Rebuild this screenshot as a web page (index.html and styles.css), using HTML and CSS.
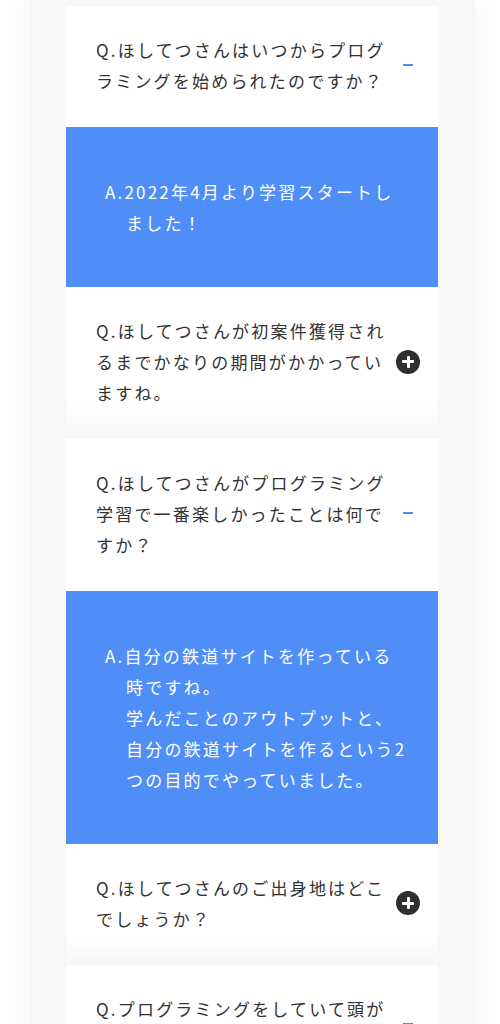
FILE: index.html
```html
<!DOCTYPE html>
<html lang="ja">
<head>
<meta charset="utf-8">
<title>FAQ</title>
<link rel="stylesheet" href="styles.css">
</head>
<body>
<div class="page">
  <div class="faq">
    <div class="q open">
      <p class="q-text">Q.ほしてつさんはいつからプログラミングを始められたのですか？</p>
      <span class="icon minus"></span>
    </div>
    <div class="a">
      <p class="a-text">A.2022年4月より学習スタートしました！</p>
    </div>
    <div class="q closed">
      <p class="q-text">Q.ほしてつさんが初案件獲得されるまでかなりの期間がかかっていますね。</p>
      <span class="icon plus"></span>
    </div>
    <div class="q open">
      <p class="q-text">Q.ほしてつさんがプログラミング学習で一番楽しかったことは何ですか？</p>
      <span class="icon minus"></span>
    </div>
    <div class="a">
      <p class="a-text">A.自分の鉄道サイトを作っている時ですね。<br>学んだことのアウトプットと、<br>自分の鉄道サイトを作るという2つの目的でやっていました。</p>
    </div>
    <div class="q closed">
      <p class="q-text">Q.ほしてつさんのご出身地はどこでしょうか？</p>
      <span class="icon plus"></span>
    </div>
    <div class="q open">
      <p class="q-text">Q.プログラミングをしていて頭が痛くなったことはありますか？</p>
      <span class="icon minus"></span>
    </div>
  </div>
</div>
</body>
</html>
```
FILE: styles.css
```css
* { box-sizing: border-box; }
html, body { margin: 0; padding: 0; }
body {
  background: #ffffff;
  font-family: "Noto Sans CJK JP", "Noto Sans", sans-serif;
  height: 1024px;
  overflow: hidden;
}
.page {
  margin-left: 30px;
  width: 445px;
  min-height: 1100px;
  padding: 6px 37px 0 36px;
  background: #f7f7f7;
  box-shadow: 0 0 24px 8px rgba(0, 0, 0, 0.025);
}
.faq {
  width: 372px;
}
.q {
  display: flex;
  align-items: center;
  gap: 6px;
  padding: 28px 18px 31px 30px;
  background: #ffffff;
}
.q.closed {
  background: linear-gradient(to bottom, #ffffff 0%, #ffffff 78%, #f6f6f6 100%);
}
.q-text {
  margin: 0;
  width: 295px;
  font-size: 17px;
  line-height: 31px;
  letter-spacing: 2.2px;
  color: #333333;
}
.icon {
  flex: 0 0 23px;
  width: 23px;
  height: 23px;
  position: relative;
}
.minus::before {
  content: "";
  position: absolute;
  left: 6px;
  top: 10px;
  width: 10px;
  height: 2px;
  background: #4f8cf6;
}
.plus {
  flex-basis: 24px;
  width: 24px;
  height: 24px;
  border-radius: 50%;
  background: #2f2f2f;
}
.plus::before,
.plus::after {
  content: "";
  position: absolute;
  background: #ffffff;
  border-radius: 1px;
}
.plus::before {
  left: 6px;
  top: 10.5px;
  width: 12px;
  height: 3px;
}
.plus::after {
  left: 10.5px;
  top: 6px;
  width: 3px;
  height: 12px;
}
.a {
  background: #4f8ef7;
  padding: 49px 28px 49px 60px;
}
.a-text {
  margin: 0;
  text-indent: -21px;
  font-size: 17px;
  line-height: 31px;
  letter-spacing: 2.2px;
  color: #ffffff;
}
```
